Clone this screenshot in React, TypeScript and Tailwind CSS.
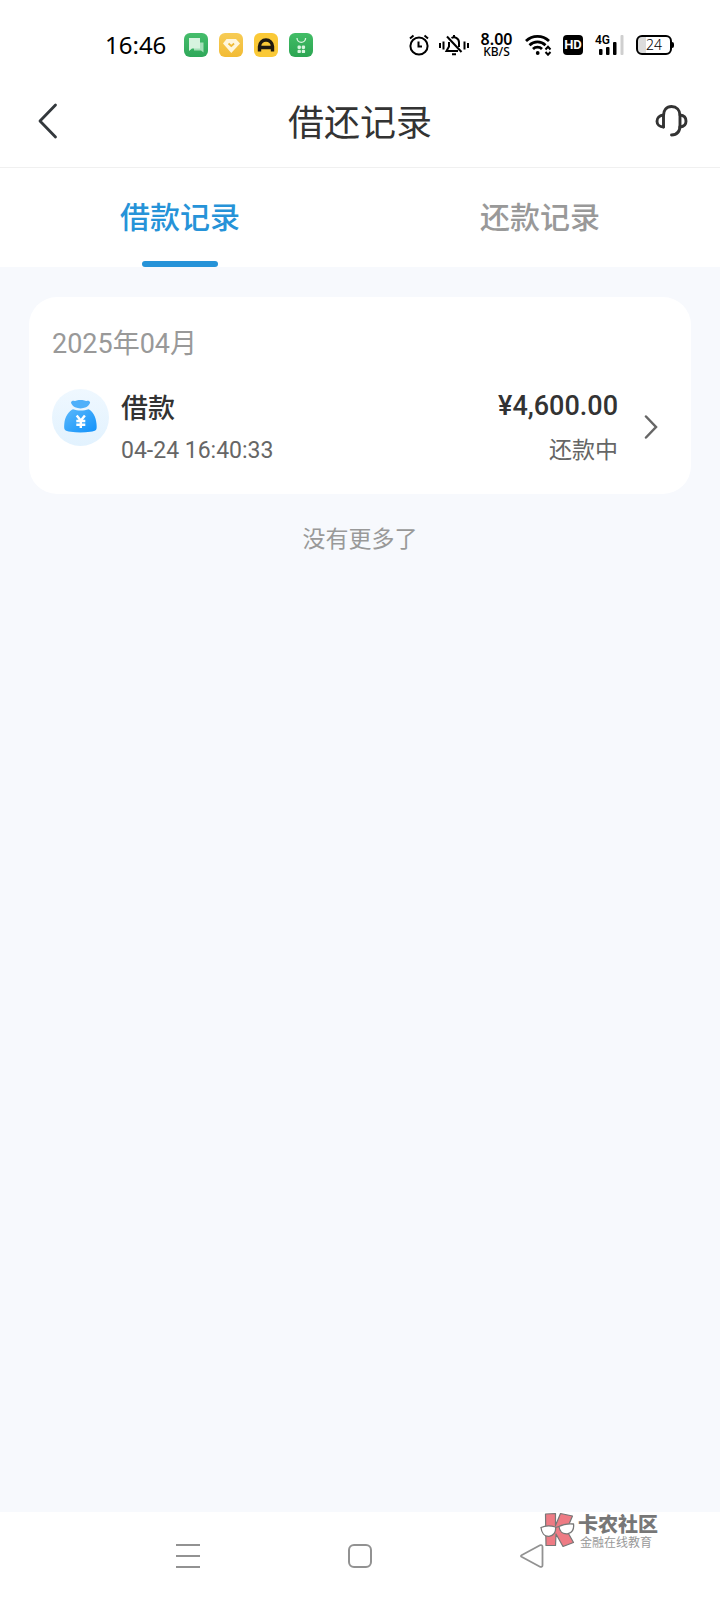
import { useState } from "react";
import type { ReactNode } from "react";

interface LoanRecord {
  id: string;
  title: string;
  time: string;
  amount: string;
  status: string;
}

interface TabButtonProps {
  label: string;
  active: boolean;
  onClick: () => void;
}

const records: LoanRecord[] = [
  {
    id: "1",
    title: "借款",
    time: "04-24 16:40:33",
    amount: "¥4,600.00",
    status: "还款中",
  },
];

const AppBadge = ({
  className,
  children,
}: {
  className: string;
  children: ReactNode;
}) => (
  <span className={`size-6 shrink-0 overflow-hidden rounded-md ${className}`}>
    <svg viewBox="0 0 24 24" className="size-6">
      {children}
    </svg>
  </span>
);

const StatusBar = () => (
  <div className="flex h-[74px] items-center justify-between bg-white pt-4 pr-[46px] pl-[105px] text-black">
    <div className="flex items-center gap-[11px]">
      <span className="mr-[7px] font-['Noto_Sans',sans-serif] text-2xl">
        16:46
      </span>

      <AppBadge className="bg-gradient-to-b from-[#45bd6b] to-[#2fa85a]">
        <path d="M10 9.500h9.500v10l-2.500-2h-7z" fill="#a5dfb8" />
        <path d="M5 5h11v10.500H8L5 18z" fill="#d6f3df" />
      </AppBadge>
      <AppBadge className="bg-gradient-to-b from-[#f7cc55] to-[#f2bb33]">
        <path d="M7.500 6h9.500l4 4.500-8.700 9.500L4 10.500z" fill="#fff6dc" />
        <path
          d="M9.500 10.500l2.800 2.500 2.800-2.500"
          fill="none"
          stroke="#f0ba35"
          strokeWidth="1.700"
        />
      </AppBadge>
      <AppBadge className="bg-[#fac937]">
        <path
          d="M5.500 18.500v-5a6.500 6.500 0 0 1 13 0v5M4 14.500h16"
          fill="none"
          stroke="#1f1a10"
          strokeWidth="3.400"
        />
      </AppBadge>
      <AppBadge className="bg-gradient-to-b from-[#42bd66] to-[#2ba552]">
        <path
          d="M8 5a4.300 4.300 0 0 0 8.600 0"
          fill="none"
          stroke="#d8f5df"
          strokeWidth="1.300"
        />
        <g fill="#d8f5df">
          <rect x="8.500" y="12.500" width="3.400" height="3.400" rx="1.200" />
          <rect x="12.700" y="12.500" width="3.400" height="3.400" rx="1.200" />
          <rect x="8.500" y="16.700" width="3.400" height="3.400" rx="1.200" />
          <rect x="12.700" y="16.700" width="3.400" height="3.400" rx="1.200" />
        </g>
      </AppBadge>
    </div>

    <div className="flex items-center">
      <svg
        viewBox="0 0 20 22"
        className="mr-2.5 h-[22px] w-5"
        fill="none"
        stroke="currentColor"
        strokeWidth="2"
      >
        <circle cx="10" cy="12" r="8.600" />
        <path d="M9.500 7.500v5H13" />
        <path d="M1 4.500L4.500 1.500M19 4.500L15.500 1.500" />
      </svg>

      <svg
        viewBox="0 0 30 22"
        className="mr-2.5 h-[22px] w-[30px]"
        fill="none"
        stroke="currentColor"
        strokeWidth="2"
      >
        <path d="M1 9v5M4.500 7.500v8M29 9v5M25.500 7.500v8" />
        <path d="M8 2.500L22.500 18" />
        <path d="M12.500 4a5 5 0 0 1 7.500 4.500v4.500M10 8v4.500L7.500 17H19" />
        <path d="M15 1v2M13 20.200h4" />
      </svg>

      <div className="mr-[11px] flex w-[35px] flex-col items-center font-['Noto_Sans',sans-serif]">
        <span className="text-base leading-[14px] font-semibold">8.00</span>
        <span className="text-xs leading-3 font-medium">KB/S</span>
      </div>

      <svg
        viewBox="0 0 28 22"
        className="mr-2.5 h-[22px] w-7"
        fill="none"
        stroke="currentColor"
        strokeWidth="2.800"
      >
        <path d="M1 7a16.500 16.500 0 0 1 23 0M4.500 11.200a11.500 11.500 0 0 1 16 0M8 15a6.500 6.500 0 0 1 9 0" />
        <circle cx="12.700" cy="19" r="1.900" fill="currentColor" stroke="none" />
        <path
          d="M20.500 15.500l2.500-2.700 2.500 2.700M20.500 18l2.500 2.700 2.500-2.700"
          strokeWidth="2"
        />
      </svg>

      <span className="mr-3 flex size-5 items-center justify-center rounded bg-black font-['Roboto',sans-serif] text-[13px] font-bold text-white">
        HD
      </span>

      <div className="relative mr-3 h-[22px] w-[29px]">
        <svg viewBox="0 0 29 22" className="h-[22px] w-[29px]" fill="currentColor">
          <rect x="4" y="15" width="3.500" height="6" rx="1" />
          <rect x="11" y="13" width="3.500" height="8" rx="1" />
          <rect x="18" y="8" width="3.500" height="13" rx="1" />
          <rect x="25.500" y="1" width="3" height="20" rx="1" fill="#cfcfcf" />
        </svg>
        <span className="absolute top-0 left-0 font-['Roboto',sans-serif] text-xs leading-3 font-semibold">
          4G
        </span>
      </div>

      <div className="flex items-center">
        <span className="flex h-5 w-9 items-center justify-center rounded-md border-2 border-black bg-gradient-to-r from-[#dcdcdc] from-24% to-white to-24% font-['Noto_Sans',sans-serif] text-sm font-light">
          24
        </span>
        <span className="h-1.5 w-0.5 rounded-r bg-black" />
      </div>
    </div>
  </div>
);

const TabButton = ({ label, active, onClick }: TabButtonProps) => (
  <button
    type="button"
    role="tab"
    aria-selected={active}
    onClick={onClick}
    className={`flex h-[99px] flex-1 flex-col items-center justify-between pt-[27px] text-[30px] leading-[46px] font-medium ${
      active ? "text-[#2693d8]" : "text-[#999999]"
    }`}
  >
    {label}
    <span
      className={`h-1.5 w-[76px] rounded-full ${
        active ? "bg-[#2693d8]" : "bg-transparent"
      }`}
    />
  </button>
);

const MoneyBag = () => (
  <svg viewBox="0 0 57 57" className="mt-[3px] size-[57px] shrink-0 self-start">
    <defs>
      <linearGradient id="bagCircle" x1="0" y1="0" x2="0" y2="1">
        <stop offset="0" stopColor="#eff8ff" />
        <stop offset="1" stopColor="#e2f2fe" />
      </linearGradient>
      <linearGradient id="bagBody" x1="0" y1="0" x2="1" y2="1">
        <stop offset="0" stopColor="#5bb8fb" />
        <stop offset="1" stopColor="#1192fb" />
      </linearGradient>
    </defs>
    <circle cx="28.500" cy="28.500" r="28.500" fill="url(#bagCircle)" />
    <path
      d="M23 18.300c-1.500-1-4-3-4-4.800.2-1.400 1.800-2 3.500-1.600 1.700.3 2.300-.9 4.300-.9h3.500c2 0 2.700 1.200 4.300.9 1.700-.4 3.300.2 3.500 1.600 0 1.800-2.600 3.800-4.100 4.800-3.500 1.500-7.500 1.500-11 0z"
      fill="#4fb0fa"
    />
    <path
      d="M21 20.300c4.500 1.600 11 1.600 15.500 0 4 1.700 7.500 7.700 8 14.500.2 2.500.4 4.500-.3 5.800-.9 1.400-3 1.800-6 2.200-6 .8-13.500.8-19.500 0-3-.4-5-.8-6-2.200-.7-1.300-.6-3.300-.4-5.800.5-6.800 4.700-12.800 8.700-14.500z"
      fill="url(#bagBody)"
    />
    <path
      d="M24.700 26.500l4.100 5 4.100-5M28.800 31.500v7.500M24.300 32h9M24.300 35.700h9"
      fill="none"
      stroke="#fff"
      strokeWidth="2.400"
    />
  </svg>
);

const RecordRow = ({ record }: { record: LoanRecord }) => (
  <button type="button" className="flex w-full items-center text-left">
    <MoneyBag />

    <span className="ml-3 flex flex-1 flex-col pt-0.5">
      <span className="text-[27px] leading-[42px] font-medium text-[#333333]">
        {record.title}
      </span>
      <span className="text-[23px] leading-[42px] text-[#666666]">
        {record.time}
      </span>
    </span>

    <span className="flex flex-col items-end gap-[5px] self-start">
      <span className="text-[27px] leading-10 font-medium text-[#333333]">
        {record.amount}
      </span>
      <span className="text-[23px] leading-10 text-[#666666]">
        {record.status}
      </span>
    </span>

    <svg
      viewBox="0 0 14 24"
      className="mr-2.5 mb-1 ml-[26px] h-6 w-3.5"
      fill="none"
      stroke="#666666"
      strokeWidth="2.500"
      strokeLinecap="round"
    >
      <path d="M2 1.500l10 10.500L2 22.500" />
    </svg>
  </button>
);

const Watermark = () => (
  <div className="absolute top-0 right-[62px] flex items-start gap-0.5 font-['Noto_Sans_CJK_SC',sans-serif]">
    <svg viewBox="0 0 36 38" className="h-[38px] w-9">
      <path
        d="M5.500 2l10-.5v12L20.500 1.500 32.500 4l-6 14 7 12.500-10.500 4L16 22l-.5 11.500H6z"
        fill="#ee7b84"
        stroke="#777777"
        strokeWidth="1.200"
        strokeLinejoin="round"
      />
      <g fill="#fff" stroke="#777777" strokeWidth="1.300">
        <path d="M1 15.500c4-1.800 10-1.800 14.500-.5.800 5-2 9-6.500 9.300-4.500.2-7.500-3.500-8-8.800z" />
        <path d="M19 14.500c4-2.300 9-3 14.500-2.500.8 5-1.500 9.300-6 9.800-4.500.4-8-2.300-8.500-7.300z" />
        <path d="M15.500 15.500l3.500-1" />
      </g>
    </svg>
    <div className="flex flex-col">
      <span className="text-xl leading-6 font-black text-[#777777]">
        卡农社区
      </span>
      <span className="pl-0.5 text-xs leading-3 text-[#999999]">
        金融在线教育
      </span>
    </div>
  </div>
);

const SystemNav = () => (
  <nav className="relative flex h-[88px] items-center justify-center gap-[148px] bg-white text-[#929292]">
    <button type="button" aria-label="Recent apps">
      <svg viewBox="0 0 24 24" className="size-6" stroke="currentColor" strokeWidth="2">
        <path d="M0 1h24M0 12h24M0 23h24" />
      </svg>
    </button>
    <button type="button" aria-label="Home">
      <svg
        viewBox="0 0 24 24"
        className="size-6"
        fill="none"
        stroke="currentColor"
        strokeWidth="2"
      >
        <rect x="1" y="1" width="22" height="22" rx="5" />
      </svg>
    </button>
    <button type="button" aria-label="Back">
      <svg
        viewBox="0 0 24 24"
        className="size-6"
        fill="none"
        stroke="currentColor"
        strokeWidth="1.800"
        strokeLinejoin="round"
      >
        <path d="M1.500 11.200L20 1.300c1.200-.6 2.500 0 2.500 1.500v18.400c0 1.500-1.300 2.100-2.500 1.500L1.500 12.800c-.7-.4-.7-1.200 0-1.600z" />
      </svg>
    </button>

    <Watermark />
  </nav>
);

const App = () => {
  const [tab, setTab] = useState<"loan" | "repay">("loan");

  return (
    <div
      lang="zh-CN"
      className="flex min-h-screen flex-col bg-[#f7f9fd] font-['Roboto','Noto_Sans_CJK_SC',sans-serif]"
    >
      <StatusBar />

      <header className="flex h-[94px] items-center justify-between border-b border-[#f0f0f0] bg-white px-8">
        <button type="button" aria-label="返回" className="w-[34px] pl-1">
          <svg
            viewBox="0 0 22 36"
            className="h-9 w-[22px]"
            fill="none"
            stroke="#33383c"
            strokeWidth="2.800"
            strokeLinecap="round"
            strokeLinejoin="round"
          >
            <path d="M19.500 2L4 18l15.500 16" />
          </svg>
        </button>

        <h1 className="pt-1.5 text-4xl leading-[48px] text-[#333333]">
          借还记录
        </h1>

        <button type="button" aria-label="客服">
          <svg
            viewBox="0 0 34 34"
            className="size-[34px]"
            fill="none"
            stroke="#333333"
            strokeWidth="2.900"
            strokeLinecap="round"
            strokeLinejoin="round"
          >
            <path d="M9.500 23V11.500C9.500 6 12.500 2.500 17.500 2.500s8.500 3.500 8.500 9V21c0 6.500-3 10-8.500 10" />
            <path d="M9.500 11c-4 .3-6.500 3-6.500 6.200s2.500 5.800 6.500 5.800" />
            <path d="M26 11c4 .3 6 3 6 6.200s-2 5.300-6 5.800" />
          </svg>
        </button>
      </header>

      <div role="tablist" className="flex bg-white">
        <TabButton
          label="借款记录"
          active={tab === "loan"}
          onClick={() => setTab("loan")}
        />
        <TabButton
          label="还款记录"
          active={tab === "repay"}
          onClick={() => setTab("repay")}
        />
      </div>

      <main className="flex-1 px-[29px] pt-[30px]">
        <section className="rounded-[28px] bg-white px-[23px] pt-[29px] pb-[22px]">
          <h2 className="mb-6 text-[27px] leading-9 text-[#999999]">
            2025年04月
          </h2>

          {records.map((record) => (
            <RecordRow key={record.id} record={record} />
          ))}
        </section>

        <p className="mt-7 text-center text-[23px] leading-9 text-[#999999]">
          没有更多了
        </p>
      </main>

      <SystemNav />
    </div>
  );
};

export default App;
